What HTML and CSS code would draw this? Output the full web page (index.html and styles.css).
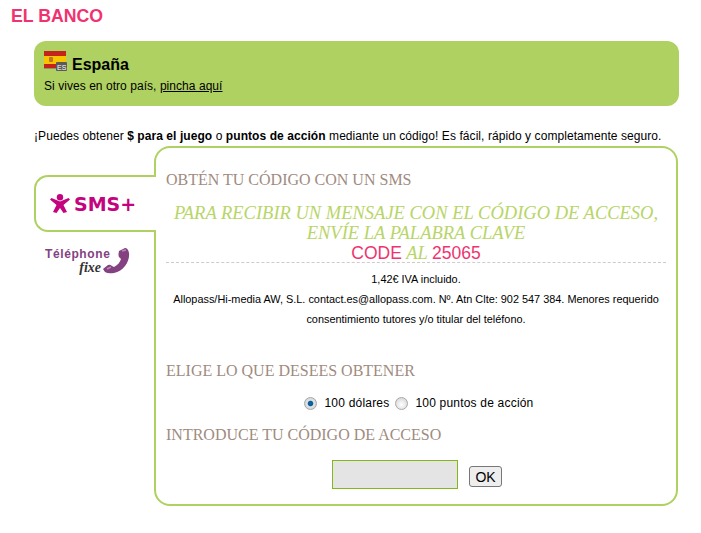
FILE: index.html
```html
<!DOCTYPE html>
<html lang="en">

<head>
    <meta charset="UTF-8">
    <meta name="viewport" content="width=device-width, initial-scale=1.0">
    <title>El Banco - Allopass</title>
    <link rel="stylesheet" href="styles.css">
</head>

<body>
    <h1 class="brand">EL BANCO</h1>

    <div class="container">
        <div class="country">
            <div class="country-title">
                <svg class="flag" width="24" height="21" viewBox="0 0 24 21" xmlns="http://www.w3.org/2000/svg">
                    <rect x="0" y="0" width="22" height="5" fill="#c4231c" />
                    <rect x="0" y="5" width="22" height="8" fill="#f6c400" />
                    <rect x="0" y="13" width="22" height="4" fill="#c4231c" />
                    <rect x="0" y="17" width="22" height="1" fill="#9a8f60" />
                    <rect x="5" y="6" width="4" height="5" rx="1" fill="#c2702a" />
                    <rect x="12" y="11" width="11" height="9" rx="1" fill="#5a5a5a" />
                    <text x="13" y="18.500" class="flag-code">ES</text>
                </svg>
                <h2>España</h2>
            </div>
            <p>Si vives en otro país, <a href="#">pincha aquí</a></p>
        </div>

        <p class="intro">¡Puedes obtener <strong>$ para el juego</strong> o <strong>puntos de acción</strong> mediante un código! Es fácil, rápido y completamente seguro.</p>

        <div class="payment">
            <div class="tabs">
                <div class="tab-active">
                    <svg width="20" height="19" viewBox="0 0 20 19" xmlns="http://www.w3.org/2000/svg">
                        <circle cx="10" cy="3.200" r="3.200" fill="#c4037f" />
                        <path d="M0 5.500L1.500 4L10 7.500L18.500 4L20 5.500L13.500 11L17 18L13.500 19L10 14L6.500 19L3 18L6.500 11Z" fill="#c4037f" />
                    </svg>
                    <span class="sms-label">SMS+</span>
                </div>
                <div class="tab-phone">
                    <div class="phone-label">
                        <span class="phone-word">Téléphone</span>
                        <span class="phone-fixe">fixe</span>
                    </div>
                    <svg class="phone-icon" width="28" height="28" viewBox="0 0 28 28" xmlns="http://www.w3.org/2000/svg">
                        <path d="M17 4L23 1Q26 1 27 6C28 14 22 24 12 26Q6 27 3 25L1 22L6 18Q8 17 10 19L12 20C16 18 18 15 19 12L17 10Q16 8 17 4Z" fill="#84417f" />
                        <path d="M20 4L24 3M5 22L9 20" stroke="#b98ab4" stroke-width="1.500" fill="none" />
                    </svg>
                </div>
            </div>

            <div class="panel">
                <h3 class="section-title">OBTÉN TU CÓDIGO CON UN SMS</h3>
                <div class="sms-message">
                    PARA RECIBIR UN MENSAJE CON EL CÓDIGO DE ACCESO,<br>
                    ENVÍE LA PALABRA CLAVE<br>
                    <span class="keyword">CODE</span> AL <span class="keyword">25065</span>
                </div>
                <div class="legal">
                    <p>1,42€ IVA incluido.</p>
                    <p>Allopass/Hi-media AW, S.L. contact.es@allopass.com. Nº. Atn Clte: 902 547 384. Menores requerido consentimiento tutores y/o titular del teléfono.</p>
                </div>

                <h3 class="section-title choose-title">ELIGE LO QUE DESEES OBTENER</h3>
                <div class="choices">
                    <input type="radio" id="dollars" name="reward" checked>
                    <label for="dollars">100 dólares</label>
                    <input type="radio" id="points" name="reward">
                    <label for="points">100 puntos de acción</label>
                </div>

                <h3 class="section-title code-title">INTRODUCE TU CÓDIGO DE ACCESO</h3>
                <form class="code-form">
                    <input type="text" class="code-input" name="code">
                    <button type="button" class="btn-ok">OK</button>
                </form>
            </div>
        </div>
    </div>
</body>

</html>
```

FILE: styles.css
```css
* {
    margin: 0;
    padding: 0;
    box-sizing: border-box;
    font-family: 'Liberation Sans', Arial, sans-serif;
}

body {
    background-color: #fff;
    color: #000;
    font-size: 12px;
    padding: 7px 22px 0 11px;
}

.brand {
    color: #f0336f;
    font-size: 17.7px;
    line-height: 18px;
    font-weight: 700;
}

.container {
    margin: 16px 0 0 23px;
}

.country {
    background-color: #afd161;
    border-radius: 12px;
    height: 65px;
    padding: 10px 10px 0;
}

.country-title {
    display: flex;
    align-items: flex-start;
    height: 24px;
}

.flag {
    margin-right: 4px;
}

.flag-code {
    font-size: 7px;
    fill: #fff;
}

.country-title h2 {
    font-size: 16px;
    font-weight: 700;
    line-height: 27px;
}

.country p {
    margin-top: 4px;
    line-height: 14px;
    letter-spacing: 0.05px;
}

.country a {
    color: #000;
}

.intro {
    margin-top: 23px;
    line-height: 14px;
    letter-spacing: 0.07px;
}

.payment {
    display: flex;
    margin-top: 3px;
    margin-right: 1px;
}

.tabs {
    width: 122px;
    flex-shrink: 0;
    margin-right: -2px;
    padding-top: 29px;
    position: relative;
}

.tab-active {
    height: 57px;
    background-color: #fff;
    border: 2px solid #afd161;
    border-right: none;
    border-radius: 14px 0 0 14px;
    display: flex;
    align-items: center;
    padding-left: 14px;
}

.sms-label {
    color: #c4037f;
    font-family: 'DejaVu Sans', sans-serif;
    font-size: 19px;
    font-weight: 700;
    margin-left: 4px;
}

.tab-phone {
    display: flex;
    padding: 14px 0 0 11px;
}

.phone-label {
    text-align: right;
    width: 62px;
    padding-top: 1px;
}

.phone-word {
    display: block;
    color: #84417f;
    font-size: 12px;
    font-weight: 700;
    line-height: 14px;
    letter-spacing: 0.6px;
}

.phone-fixe {
    display: block;
    color: #333;
    font-family: 'Liberation Serif', serif;
    font-size: 14px;
    font-style: italic;
    font-weight: 700;
    line-height: 14px;
    padding-right: 6px;
}

.phone-icon {
    margin-top: 1px;
    margin-left: -5px;
}

.panel {
    flex-grow: 1;
    min-width: 0;
    height: 360px;
    border: 2px solid #afd161;
    border-radius: 16px;
    padding: 0 10px;
}

.section-title {
    color: #a08b80;
    font-family: 'Liberation Serif', serif;
    font-size: 16px;
    font-weight: 400;
    line-height: 18px;
    margin-top: 23px;
}

.sms-message {
    color: #b8d568;
    font-family: 'Liberation Serif', serif;
    font-size: 18.5px;
    font-style: italic;
    line-height: 20px;
    text-align: center;
    margin-top: 14px;
}

.keyword {
    color: #f0336f;
    font-style: normal;
    font-size: 17.5px;
}

.legal {
    border-top: 1px dashed #ccc;
    font-size: 10.9px;
    line-height: 20px;
    text-align: center;
    margin-top: -1px;
    padding-top: 6px;
}

.choose-title {
    margin-top: 33px;
}

.choices {
    display: flex;
    align-items: center;
    justify-content: center;
    margin-top: 15px;
    height: 16px;
    padding-left: 12px;
}

.choices input {
    appearance: none;
    width: 13px;
    height: 13px;
    border-radius: 50%;
    border: 1px solid #a8a8a8;
    background: radial-gradient(circle at 50% 60%, #fff, #cfcfcf);
    margin-right: 7px;
}

.choices input:checked {
    background: radial-gradient(circle, #0a6ea8 0, #0a5a90 28%, #dfe6ea 42%, #c8c8c8 100%);
}

.choices label {
    margin-right: 6px;
    letter-spacing: 0.2px;
}

.code-title {
    margin-top: 15px;
}

.code-form {
    display: flex;
    align-items: flex-end;
    justify-content: center;
    margin-top: 16px;
    padding-left: 2px;
}

.code-input {
    width: 126px;
    height: 29px;
    background-color: #e4e4e4;
    border: 1px solid #84b818;
    margin-right: 11px;
}

.btn-ok {
    width: 33px;
    height: 21px;
    font-size: 14px;
    background-color: #eee;
    border: 1px solid #777;
    border-radius: 3px;
    margin-bottom: 2px;
}
```
